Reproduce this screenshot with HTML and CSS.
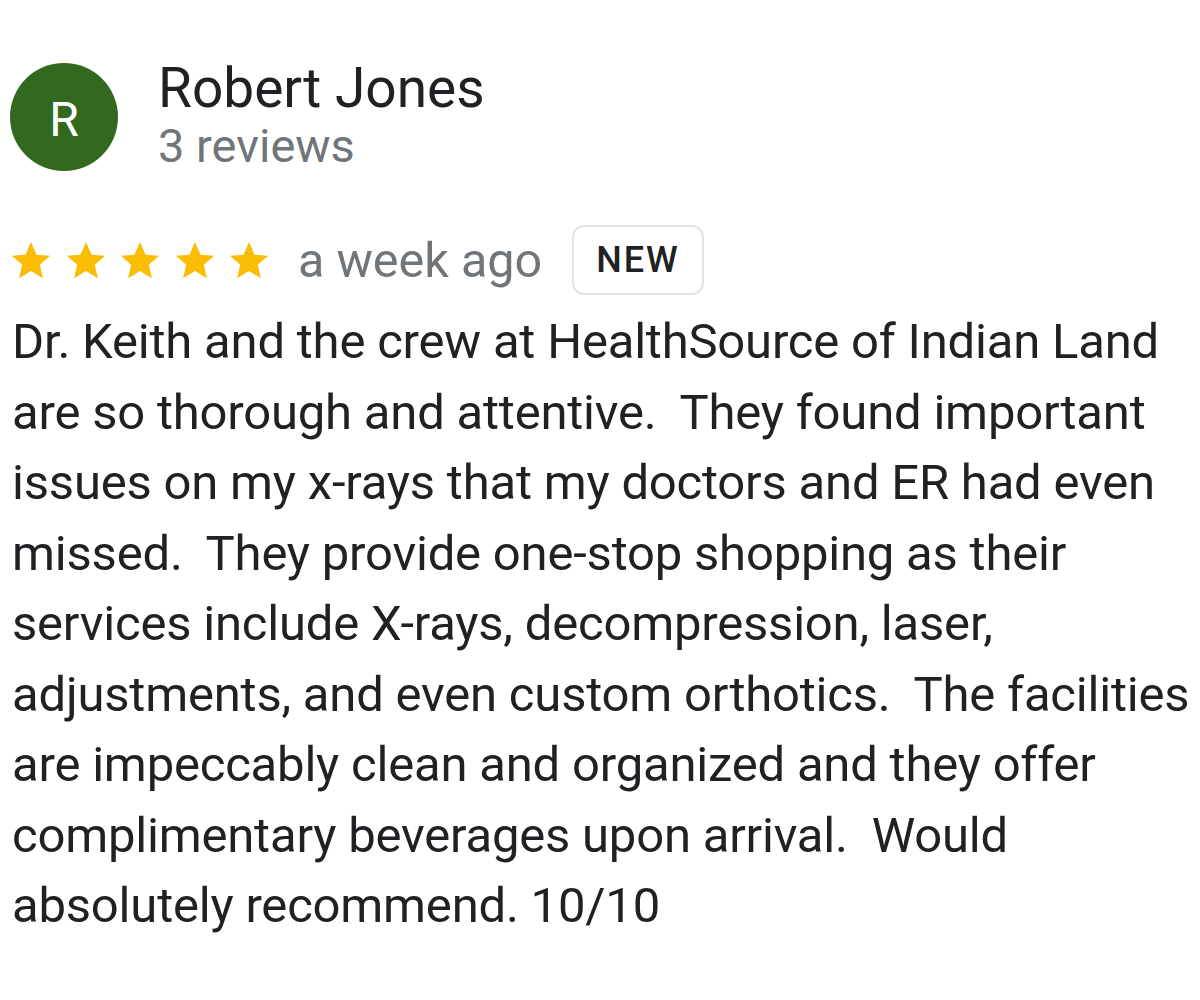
FILE: index.html
```html
<!DOCTYPE html>
<html lang="en">
<head>
<meta charset="utf-8">
<title>Review</title>
<link rel="stylesheet" href="styles.css">
</head>
<body>
<div class="review">
  <div class="author">
    <div class="avatar">R</div>
    <div class="author-info">
      <div class="name">Robert Jones</div>
      <div class="count">3 reviews</div>
    </div>
  </div>
  <div class="meta">
    <div class="stars">
      <svg class="star" viewBox="0 0 24 24"><path d="M12 2.6l2.9 6.6 7.1.6-5.4 4.7 1.6 7-6.2-3.7-6.2 3.7 1.6-7L2 9.8l7.1-.6z"/></svg>
      <svg class="star" viewBox="0 0 24 24"><path d="M12 2.6l2.9 6.6 7.1.6-5.4 4.7 1.6 7-6.2-3.7-6.2 3.7 1.6-7L2 9.8l7.1-.6z"/></svg>
      <svg class="star" viewBox="0 0 24 24"><path d="M12 2.6l2.9 6.6 7.1.6-5.4 4.7 1.6 7-6.2-3.7-6.2 3.7 1.6-7L2 9.8l7.1-.6z"/></svg>
      <svg class="star" viewBox="0 0 24 24"><path d="M12 2.6l2.9 6.6 7.1.6-5.4 4.7 1.6 7-6.2-3.7-6.2 3.7 1.6-7L2 9.8l7.1-.6z"/></svg>
      <svg class="star" viewBox="0 0 24 24"><path d="M12 2.6l2.9 6.6 7.1.6-5.4 4.7 1.6 7-6.2-3.7-6.2 3.7 1.6-7L2 9.8l7.1-.6z"/></svg>
    </div>
    <span class="date">a week ago</span>
    <span class="badge">NEW</span>
  </div>
  <p class="text">Dr. Keith and the crew at HealthSource of Indian Land are so thorough and attentive.  They found important issues on my x-rays that my doctors and ER had even missed.  They provide one-stop shopping as their services include X-rays, decompression, laser, adjustments, and even custom orthotics.  The facilities are impeccably clean and organized and they offer complimentary beverages upon arrival.  Would absolutely recommend. 10/10</p>
</div>
</body>
</html>
```
FILE: styles.css
```css
html, body {
  margin: 0;
  padding: 0;
  background: #ffffff;
}
body {
  font-family: Roboto, "Noto Sans", Arial, sans-serif;
  color: #202124;
}
.review {
  padding: 56px 0 0 10px;
  width: 1190px;
  box-sizing: border-box;
}
.author {
  display: flex;
  align-items: flex-start;
  gap: 40px;
}
.avatar {
  margin-top: 7px;
  width: 108px;
  height: 108px;
  border-radius: 50%;
  background: #33691e;
  color: #ffffff;
  display: flex;
  align-items: center;
  justify-content: center;
  font-size: 48px;
  padding-top: 4px;
  box-sizing: border-box;
  flex-shrink: 0;
}
.author-info {
  display: flex;
  flex-direction: column;
}
.name {
  font-size: 55px;
  line-height: 64px;
  color: #202124;
}
.count {
  font-size: 47px;
  line-height: 52px;
  color: #70757a;
}
.meta {
  display: flex;
  align-items: center;
  margin-top: 53px;
  margin-left: -2px;
}
.stars {
  display: flex;
  gap: 8.5px;
}
.star {
  width: 46px;
  height: 46px;
  fill: #fbbc04;
}
.date {
  font-size: 48.5px;
  color: #70757a;
  margin-left: 26px;
}
.badge {
  margin-left: 30px;
  border: 2px solid #e3e4e7;
  border-radius: 12px;
  padding: 12px 22px;
  font-size: 36px;
  line-height: 42px;
  font-weight: 500;
  letter-spacing: 2px;
  color: #202124;
}
.text {
  margin: 12px 0 0 2px;
  font-size: 49px;
  line-height: 70.5px;
  letter-spacing: -0.2px;
  white-space: pre-wrap;
  color: #202124;
}
```
